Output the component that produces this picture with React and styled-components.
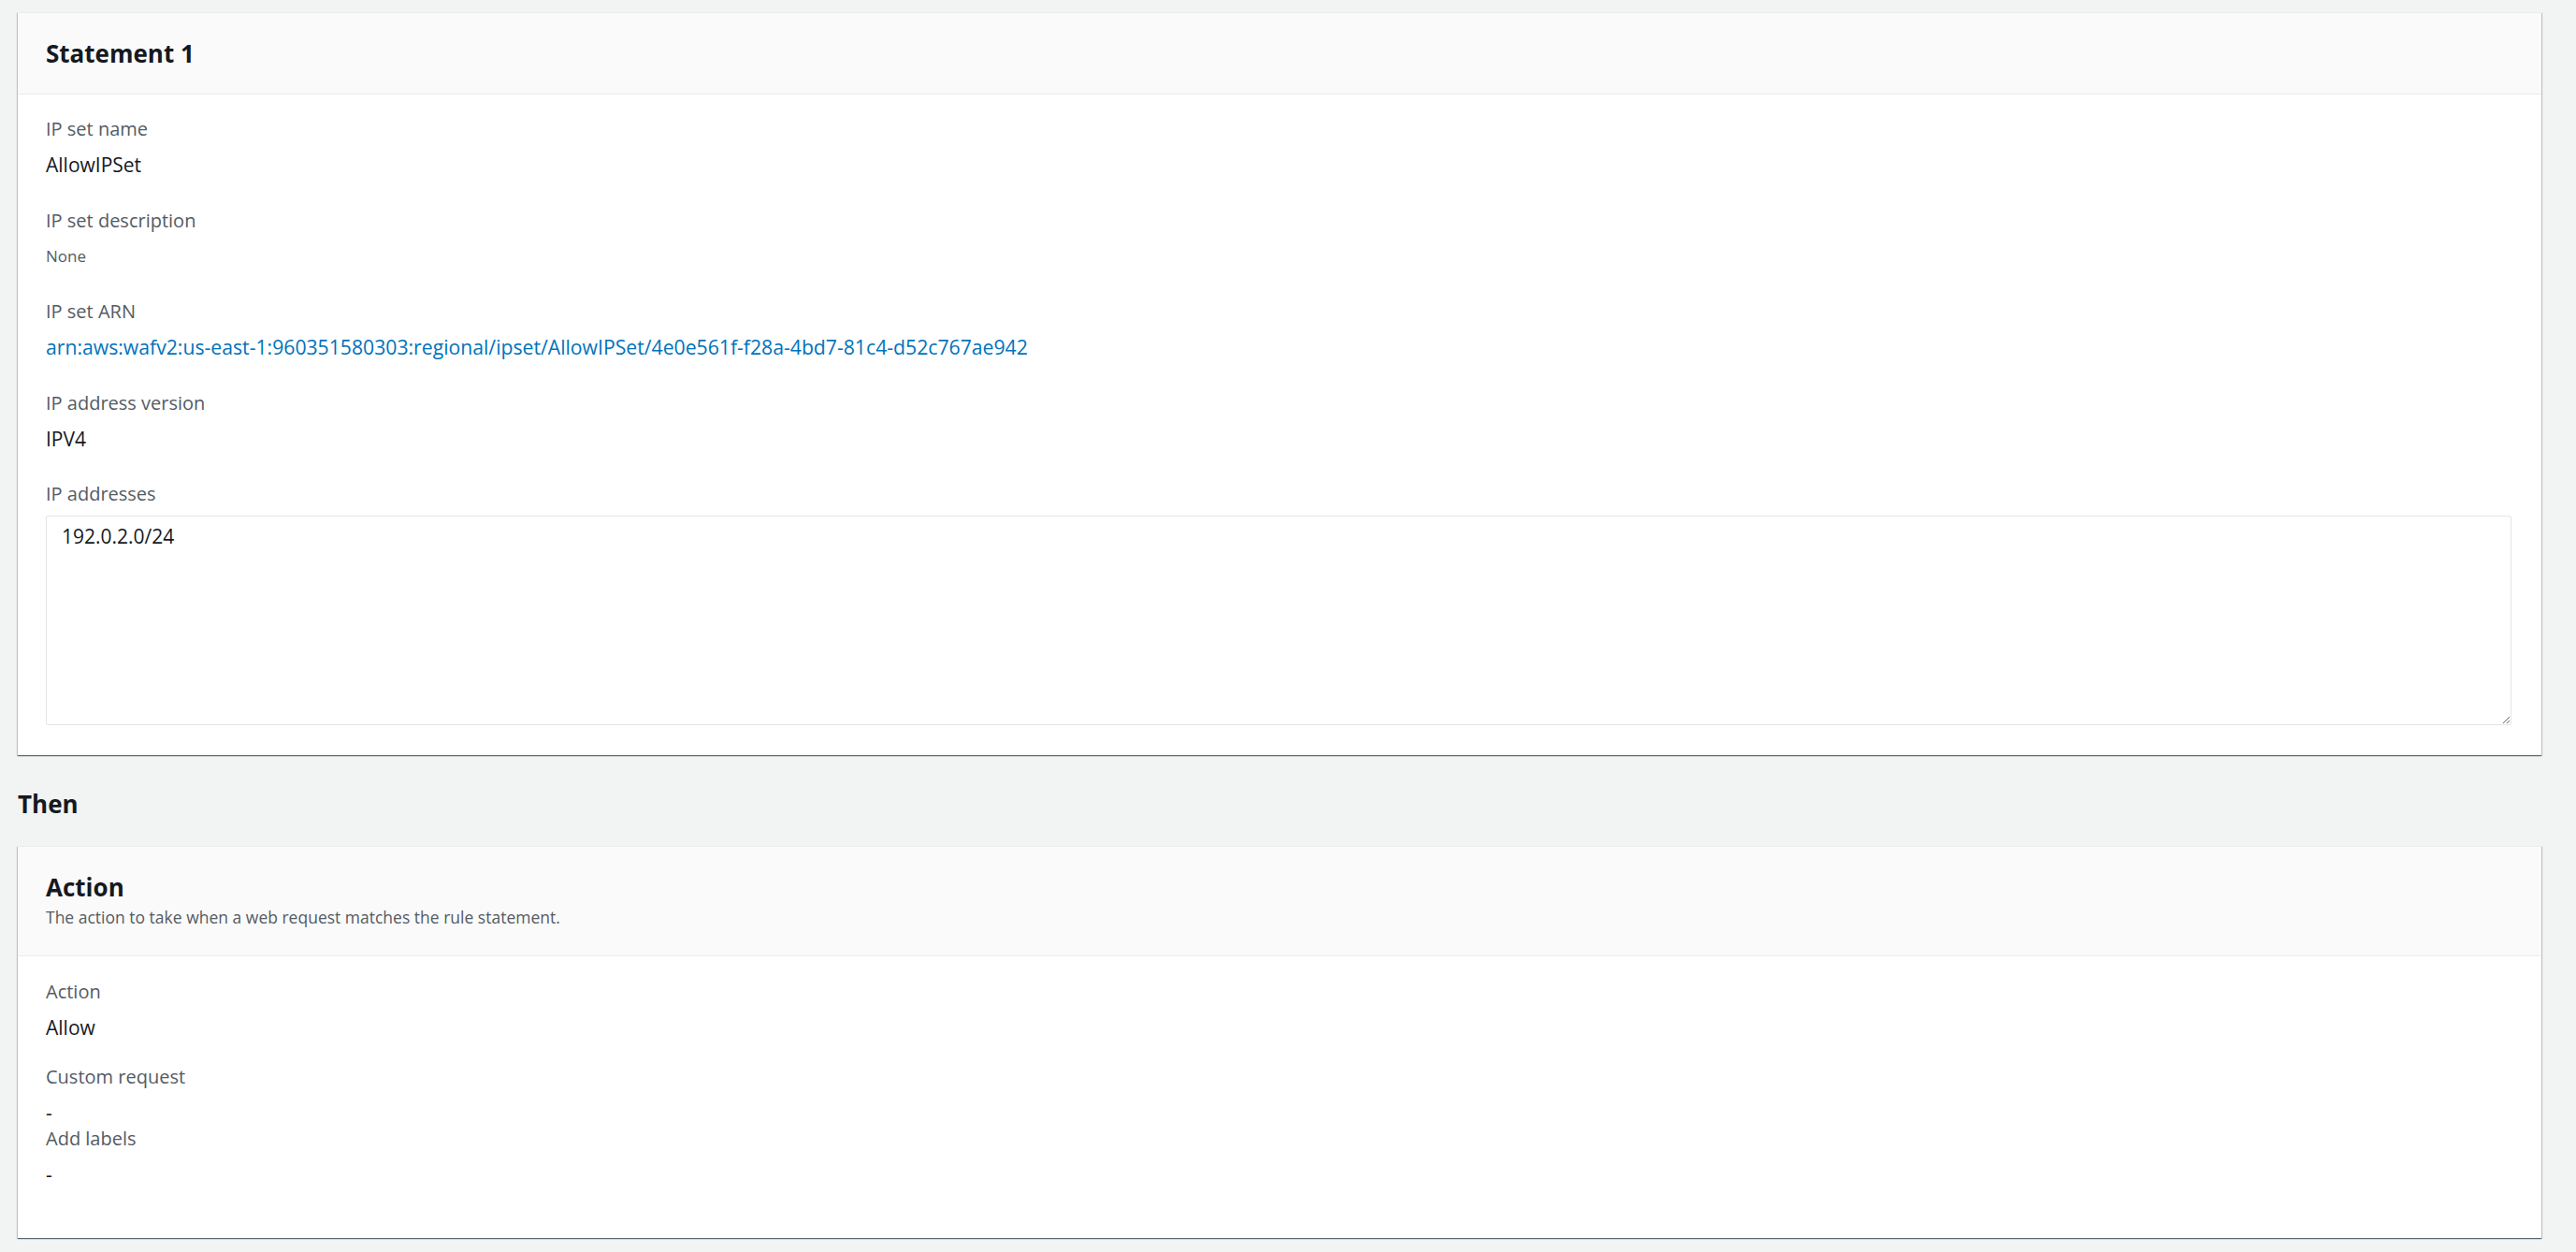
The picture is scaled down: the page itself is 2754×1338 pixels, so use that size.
import styled, { createGlobalStyle } from "styled-components";

const GlobalStyle = createGlobalStyle`
  html, body {
    margin: 0;
    padding: 0;
    background: #f2f3f3;
    font-family: "Open Sans", "Liberation Sans", Arial, sans-serif;
    color: #16191f;
  }
`;

const Page = styled.main`
  padding: 13px 37px 16px 19px;
`;

const Card = styled.section`
  background: #ffffff;
  border-top: 1px solid #eaeded;
  box-shadow: 0 1px 1px 0 rgba(0, 28, 36, 0.5), 1px 1px 1px 0 rgba(0, 28, 36, 0.15),
    -1px 1px 1px 0 rgba(0, 28, 36, 0.15);
`;

const CardHeader = styled.header`
  background: #fafafa;
  border-bottom: 1px solid #eaeded;
  padding: ${({ $compact }) => ($compact ? "26px 30px 29px" : "26px 30px 26px")};
`;

const CardTitle = styled.h2`
  margin: 0;
  font-size: 26px;
  line-height: 34px;
  font-weight: 700;
  color: #16191f;
`;

const CardDesc = styled.p`
  margin: 3px 0 0;
  font-size: 17.5px;
  line-height: 24px;
  color: #545b64;
`;

const CardBody = styled.div`
  padding: ${({ $top }) => $top || 22}px 32px ${({ $bottom }) => $bottom || 32}px 30px;
  display: flex;
  flex-direction: column;
`;

const Field = styled.div`
  display: flex;
  flex-direction: column;
  gap: ${({ $inner }) => ($inner === undefined ? 8 : $inner)}px;
  margin-bottom: ${({ $after }) => ($after === undefined ? 29.5 : $after)}px;
`;

const Label = styled.div`
  font-size: 20px;
  line-height: 30px;
  color: #545b64;
`;

const Value = styled.div`
  font-size: ${({ $small }) => ($small ? 17 : 21)}px;
  line-height: 30px;
  color: ${({ $muted }) => ($muted ? "#545b64" : "#16191f")};
`;

const Link = styled.a`
  font-size: 21.2px;
  line-height: 30px;
  color: #0073bb;
  text-decoration: none;
`;

const AddressBox = styled.textarea`
  display: block;
  box-sizing: border-box;
  width: 100%;
  height: 224px;
  margin: 0;
  padding: 6px 16px;
  border: 1px solid #e3e6e8;
  border-radius: 2px;
  background: #ffffff;
  font-family: "Open Sans", "Liberation Sans", Arial, sans-serif;
  font-size: 21px;
  line-height: 30px;
  color: #16191f;
  resize: both;
  outline: none;
`;

const SectionTitle = styled.h2`
  margin: 35px 0 28px;
  font-size: 26px;
  line-height: 34px;
  font-weight: 700;
  color: #16191f;
`;

const App = () => {
  return (
    <>
      <GlobalStyle />
      <Page>
        <Card>
          <CardHeader>
            <CardTitle>Statement 1</CardTitle>
          </CardHeader>
          <CardBody>
            <Field>
              <Label>IP set name</Label>
              <Value>AllowIPSet</Value>
            </Field>
            <Field>
              <Label>IP set description</Label>
              <Value $small $muted>None</Value>
            </Field>
            <Field>
              <Label>IP set ARN</Label>
              <Link href="#">
                arn:aws:wafv2:us-east-1:960351580303:regional/ipset/AllowIPSet/4e0e561f-f28a-4bd7-81c4-d52c767ae942
              </Link>
            </Field>
            <Field>
              <Label>IP address version</Label>
              <Value>IPV4</Value>
            </Field>
            <Field $after={0}>
              <Label>IP addresses</Label>
              <AddressBox readOnly value="192.0.2.0/24" />
            </Field>
          </CardBody>
        </Card>

        <SectionTitle>Then</SectionTitle>

        <Card>
          <CardHeader $compact>
            <CardTitle>Action</CardTitle>
            <CardDesc>The action to take when a web request matches the rule statement.</CardDesc>
          </CardHeader>
          <CardBody $top={23} $bottom={53}>
            <Field $after={23}>
              <Label>Action</Label>
              <Value>Allow</Value>
            </Field>
            <Field $after={-2}>
              <Label>Custom request</Label>
              <Value>-</Value>
            </Field>
            <Field $after={0}>
              <Label>Add labels</Label>
              <Value>-</Value>
            </Field>
          </CardBody>
        </Card>
      </Page>
    </>
  );
};

export default App;
